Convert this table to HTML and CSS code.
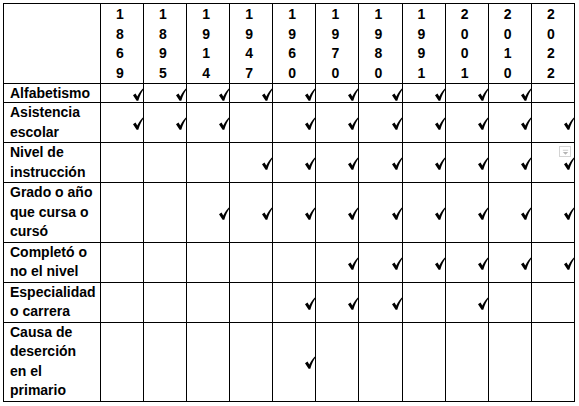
FILE: index.html
```html
<!DOCTYPE html>
<html lang="es">
<head>
<meta charset="utf-8">
<title>Tabla</title>
<link rel="stylesheet" href="styles.css">
</head>
<body>
<svg width="0" height="0" class="defs" aria-hidden="true">
  <defs>
    <symbol id="chk" viewBox="0 0 11 13">
      <path d="M0 7.2 L2.5 5.6 L4.3 8.4 C6 5.1 8.1 2.3 10.4 0 L11 0.7 C8.9 3.4 6.9 7.3 5.3 12.7 L3.6 12.7 Z"/>
    </symbol>
  </defs>
</svg>
<table class="grid">
  <colgroup>
    <col class="c-label">
    <col><col><col><col><col><col><col><col><col><col><col>
  </colgroup>
  <thead>
    <tr>
      <th class="corner"></th>
      <th><div class="year">1869</div></th>
      <th><div class="year">1895</div></th>
      <th><div class="year">1914</div></th>
      <th><div class="year">1947</div></th>
      <th><div class="year">1960</div></th>
      <th><div class="year">1970</div></th>
      <th><div class="year">1980</div></th>
      <th><div class="year">1991</div></th>
      <th><div class="year">2001</div></th>
      <th><div class="year">2010</div></th>
      <th><div class="year">2022</div></th>
    </tr>
  </thead>
  <tbody>
    <tr class="r-short">
      <th class="label">Alfabetismo</th>
      <td><svg class="ck"><use href="#chk"/></svg></td>
      <td><svg class="ck"><use href="#chk"/></svg></td>
      <td><svg class="ck"><use href="#chk"/></svg></td>
      <td><svg class="ck"><use href="#chk"/></svg></td>
      <td><svg class="ck"><use href="#chk"/></svg></td>
      <td><svg class="ck"><use href="#chk"/></svg></td>
      <td><svg class="ck"><use href="#chk"/></svg></td>
      <td><svg class="ck"><use href="#chk"/></svg></td>
      <td><svg class="ck"><use href="#chk"/></svg></td>
      <td><svg class="ck"><use href="#chk"/></svg></td>
      <td></td>
    </tr>
    <tr>
      <th class="label">Asistencia escolar</th>
      <td><svg class="ck"><use href="#chk"/></svg></td>
      <td><svg class="ck"><use href="#chk"/></svg></td>
      <td><svg class="ck"><use href="#chk"/></svg></td>
      <td></td>
      <td><svg class="ck"><use href="#chk"/></svg></td>
      <td><svg class="ck"><use href="#chk"/></svg></td>
      <td><svg class="ck"><use href="#chk"/></svg></td>
      <td><svg class="ck"><use href="#chk"/></svg></td>
      <td><svg class="ck"><use href="#chk"/></svg></td>
      <td><svg class="ck"><use href="#chk"/></svg></td>
      <td><svg class="ck"><use href="#chk"/></svg></td>
    </tr>
    <tr>
      <th class="label">Nivel de instrucción</th>
      <td></td>
      <td></td>
      <td></td>
      <td><svg class="ck"><use href="#chk"/></svg></td>
      <td><svg class="ck"><use href="#chk"/></svg></td>
      <td><svg class="ck"><use href="#chk"/></svg></td>
      <td><svg class="ck"><use href="#chk"/></svg></td>
      <td><svg class="ck"><use href="#chk"/></svg></td>
      <td><svg class="ck"><use href="#chk"/></svg></td>
      <td><svg class="ck"><use href="#chk"/></svg></td>
      <td class="has-drop"><span class="drop"><svg viewBox="0 0 10 9" class="drop-ic"><rect x="2" y="2" width="6" height="1" fill="#c8c8c8"/><path d="M2 4.5 H8 L5 7.5 Z" fill="#b4b4b4"/></svg></span><svg class="ck"><use href="#chk"/></svg></td>
    </tr>
    <tr>
      <th class="label">Grado o año que cursa o cursó</th>
      <td></td>
      <td></td>
      <td><svg class="ck"><use href="#chk"/></svg></td>
      <td><svg class="ck"><use href="#chk"/></svg></td>
      <td><svg class="ck"><use href="#chk"/></svg></td>
      <td><svg class="ck"><use href="#chk"/></svg></td>
      <td><svg class="ck"><use href="#chk"/></svg></td>
      <td><svg class="ck"><use href="#chk"/></svg></td>
      <td><svg class="ck"><use href="#chk"/></svg></td>
      <td><svg class="ck"><use href="#chk"/></svg></td>
      <td><svg class="ck"><use href="#chk"/></svg></td>
    </tr>
    <tr>
      <th class="label">Completó o no el nivel</th>
      <td></td>
      <td></td>
      <td></td>
      <td></td>
      <td></td>
      <td><svg class="ck"><use href="#chk"/></svg></td>
      <td><svg class="ck"><use href="#chk"/></svg></td>
      <td><svg class="ck"><use href="#chk"/></svg></td>
      <td><svg class="ck"><use href="#chk"/></svg></td>
      <td><svg class="ck"><use href="#chk"/></svg></td>
      <td><svg class="ck"><use href="#chk"/></svg></td>
    </tr>
    <tr>
      <th class="label">Especialidad o carrera</th>
      <td></td>
      <td></td>
      <td></td>
      <td></td>
      <td><svg class="ck"><use href="#chk"/></svg></td>
      <td><svg class="ck"><use href="#chk"/></svg></td>
      <td><svg class="ck"><use href="#chk"/></svg></td>
      <td></td>
      <td><svg class="ck"><use href="#chk"/></svg></td>
      <td></td>
      <td></td>
    </tr>
    <tr>
      <th class="label">Causa de deserción<br>en el primario</th>
      <td></td>
      <td></td>
      <td></td>
      <td></td>
      <td><svg class="ck"><use href="#chk"/></svg></td>
      <td></td>
      <td></td>
      <td></td>
      <td></td>
      <td></td>
      <td></td>
    </tr>
  </tbody>
</table>
</body>
</html>
```

FILE: styles.css
```css
html, body {
  margin: 0;
  padding: 0;
  background: #ffffff;
}

body {
  padding: 3px 0 0 3px;
  font-family: "Liberation Sans", Arial, sans-serif;
  font-weight: bold;
  font-size: 14px;
  line-height: 19.5px;
  color: #000000;
}

.defs {
  position: absolute;
  width: 0;
  height: 0;
  overflow: hidden;
}

.grid {
  border-collapse: collapse;
  table-layout: fixed;
  width: 572px;
}

.c-label {
  width: 97px;
}

.grid th,
.grid td {
  border: 1px solid #000000;
  padding: 0;
}

.grid thead th {
  vertical-align: top;
  text-align: center;
  padding: 1px 4px 0 0;
  font-weight: bold;
}

.year {
  width: 8px;
  margin: 0 auto;
  word-break: break-all;
  text-align: left;
}

.grid .label {
  text-align: left;
  vertical-align: top;
  padding: 0 2px 0 6px;
  font-weight: bold;
}

.grid .r-short .label {
  height: 17px;
  line-height: 18px;
}

.grid td {
  vertical-align: middle;
  text-align: right;
  line-height: 0;
}

.ck {
  display: inline-block;
  width: 11px;
  height: 13px;
  margin-right: -1px;
  position: relative;
  top: 1px;
  fill: #000000;
}

.has-drop {
  position: relative;
}

.drop {
  position: absolute;
  top: 3px;
  right: 3px;
  width: 12px;
  height: 11px;
  border: 1px solid #d4d4d4;
  background: #ffffff;
  box-sizing: border-box;
  display: flex;
  align-items: center;
  justify-content: center;
}

.drop-ic {
  width: 9px;
  height: 8px;
}
```
